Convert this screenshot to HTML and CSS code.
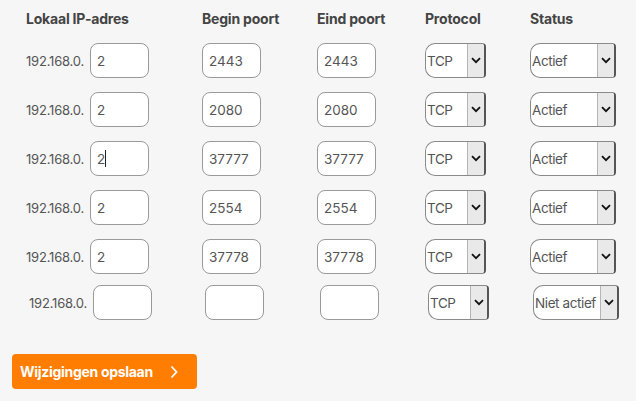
FILE: index.html
```html
<!DOCTYPE html>
<html lang="nl">
<head>
<meta charset="utf-8">
<title>Port forwarding</title>
<link rel="stylesheet" href="styles.css">
</head>
<body>
<div class="page">
  <div class="grid">
    <div class="hd">Lokaal IP-adres</div>
    <div class="hd">Begin poort</div>
    <div class="hd">Eind poort</div>
    <div class="hd">Protocol</div>
    <div class="hd">Status</div>
  </div>

  <div class="grid row">
    <div class="ip"><span class="prefix">192.168.0.</span><span class="inp">2</span></div>
    <div><span class="inp">2443</span></div>
    <div><span class="inp">2443</span></div>
    <div><span class="sel proto"><span class="val">TCP</span><span class="arr"><svg viewBox="0 0 10 7" width="10" height="7"><path d="M1 1.2 L5 5.2 L9 1.2" fill="none" stroke="#111" stroke-width="1.8"/></svg></span></span></div>
    <div><span class="sel status"><span class="val">Actief</span><span class="arr"><svg viewBox="0 0 10 7" width="10" height="7"><path d="M1 1.2 L5 5.2 L9 1.2" fill="none" stroke="#111" stroke-width="1.8"/></svg></span></span></div>
  </div>

  <div class="grid row">
    <div class="ip"><span class="prefix">192.168.0.</span><span class="inp">2</span></div>
    <div><span class="inp">2080</span></div>
    <div><span class="inp">2080</span></div>
    <div><span class="sel proto"><span class="val">TCP</span><span class="arr"><svg viewBox="0 0 10 7" width="10" height="7"><path d="M1 1.2 L5 5.2 L9 1.2" fill="none" stroke="#111" stroke-width="1.8"/></svg></span></span></div>
    <div><span class="sel status"><span class="val">Actief</span><span class="arr"><svg viewBox="0 0 10 7" width="10" height="7"><path d="M1 1.2 L5 5.2 L9 1.2" fill="none" stroke="#111" stroke-width="1.8"/></svg></span></span></div>
  </div>

  <div class="grid row">
    <div class="ip"><span class="prefix">192.168.0.</span><span class="inp">2<span class="caret"></span></span></div>
    <div><span class="inp">37777</span></div>
    <div><span class="inp">37777</span></div>
    <div><span class="sel proto"><span class="val">TCP</span><span class="arr"><svg viewBox="0 0 10 7" width="10" height="7"><path d="M1 1.2 L5 5.2 L9 1.2" fill="none" stroke="#111" stroke-width="1.8"/></svg></span></span></div>
    <div><span class="sel status"><span class="val">Actief</span><span class="arr"><svg viewBox="0 0 10 7" width="10" height="7"><path d="M1 1.2 L5 5.2 L9 1.2" fill="none" stroke="#111" stroke-width="1.8"/></svg></span></span></div>
  </div>

  <div class="grid row">
    <div class="ip"><span class="prefix">192.168.0.</span><span class="inp">2</span></div>
    <div><span class="inp">2554</span></div>
    <div><span class="inp">2554</span></div>
    <div><span class="sel proto"><span class="val">TCP</span><span class="arr"><svg viewBox="0 0 10 7" width="10" height="7"><path d="M1 1.2 L5 5.2 L9 1.2" fill="none" stroke="#111" stroke-width="1.8"/></svg></span></span></div>
    <div><span class="sel status"><span class="val">Actief</span><span class="arr"><svg viewBox="0 0 10 7" width="10" height="7"><path d="M1 1.2 L5 5.2 L9 1.2" fill="none" stroke="#111" stroke-width="1.8"/></svg></span></span></div>
  </div>

  <div class="grid row">
    <div class="ip"><span class="prefix">192.168.0.</span><span class="inp">2</span></div>
    <div><span class="inp">37778</span></div>
    <div><span class="inp">37778</span></div>
    <div><span class="sel proto"><span class="val">TCP</span><span class="arr"><svg viewBox="0 0 10 7" width="10" height="7"><path d="M1 1.2 L5 5.2 L9 1.2" fill="none" stroke="#111" stroke-width="1.8"/></svg></span></span></div>
    <div><span class="sel status"><span class="val">Actief</span><span class="arr"><svg viewBox="0 0 10 7" width="10" height="7"><path d="M1 1.2 L5 5.2 L9 1.2" fill="none" stroke="#111" stroke-width="1.8"/></svg></span></span></div>
  </div>

  <div class="grid row new">
    <div class="ip"><span class="prefix">192.168.0.</span><span class="inp"></span></div>
    <div><span class="inp"></span></div>
    <div><span class="inp"></span></div>
    <div><span class="sel proto"><span class="val">TCP</span><span class="arr"><svg viewBox="0 0 10 7" width="10" height="7"><path d="M1 1.2 L5 5.2 L9 1.2" fill="none" stroke="#111" stroke-width="1.8"/></svg></span></span></div>
    <div><span class="sel status"><span class="val">Niet actief</span><span class="arr"><svg viewBox="0 0 10 7" width="10" height="7"><path d="M1 1.2 L5 5.2 L9 1.2" fill="none" stroke="#111" stroke-width="1.8"/></svg></span></span></div>
  </div>

  <button class="save">Wijzigingen opslaan<svg class="chev" viewBox="0 0 8 14" width="8" height="14"><path d="M1.5 1.5 L6.5 7 L1.5 12.5" fill="none" stroke="#fff" stroke-width="1.8"/></svg></button>
</div>
</body>
</html>
```

FILE: styles.css
```css
html, body {
  margin: 0;
  padding: 0;
  background: #f6f6f6;
}
body {
  font-family: "Inter", "Liberation Sans", sans-serif;
  color: #555;
  font-size: 13px;
}
.page {
  padding: 9px 0 0 0;
  width: 636px;
  height: 401px;
  box-sizing: border-box;
}
.grid {
  display: grid;
  grid-template-columns: 176px 115px 108px 105px 100px;
  padding-left: 26px;
  align-items: center;
}
.hd {
  font-weight: 700;
  font-size: 14px;
  color: #444;
  height: 20px;
  line-height: 20px;
  letter-spacing: -0.2px;
}
.row {
  margin-top: 14px;
  height: 35px;
}
.row + .row {
  margin-top: 14px;
}
.row.new {
  margin-top: 11px;
  padding-left: 29px;
}
.ip {
  display: flex;
  align-items: center;
}
.prefix {
  letter-spacing: -0.2px;
  width: 64px;
  font-size: 13px;
}
.inp {
  display: flex;
  align-items: center;
  box-sizing: border-box;
  width: 59px;
  height: 35px;
  border: 1px solid #9a9a9a;
  border-radius: 8px;
  background: #fff;
  padding-left: 6px;
  font-size: 13.5px;
  color: #555;
}
.caret {
  display: inline-block;
  width: 1px;
  height: 17px;
  background: #222;
  margin-left: 0;
}
.sel {
  display: flex;
  align-items: stretch;
  box-sizing: border-box;
  height: 35px;
  border: 1px solid #8a8a8a;
  border-right: 2px solid #555;
  border-radius: 10px 4px 4px 10px;
  background: #fff;
  overflow: hidden;
  font-size: 13.5px;
  color: #555;
}
.proto { width: 61px; }
.status { width: 86px; }
.val {
  flex: 1;
  display: flex;
  align-items: center;
  padding-left: 1px;
  white-space: nowrap;
  letter-spacing: -0.4px;
}
.arr {
  width: 16px;
  flex: none;
  display: flex;
  align-items: center;
  justify-content: center;
  background: #e9e9e9;
  border-left: 1px solid #b5b5b5;
}
.save {
  margin: 34px 0 0 12px;
  display: flex;
  align-items: center;
  width: 185px;
  height: 35px;
  border: none;
  border-radius: 4px;
  background: #ff7d00;
  color: #fff;
  font-family: "Inter", "Liberation Sans", sans-serif;
  font-weight: 700;
  font-size: 14px;
  padding: 0 0 0 8px;
  letter-spacing: -0.3px;
}
.chev {
  margin-left: 17px;
}
```
